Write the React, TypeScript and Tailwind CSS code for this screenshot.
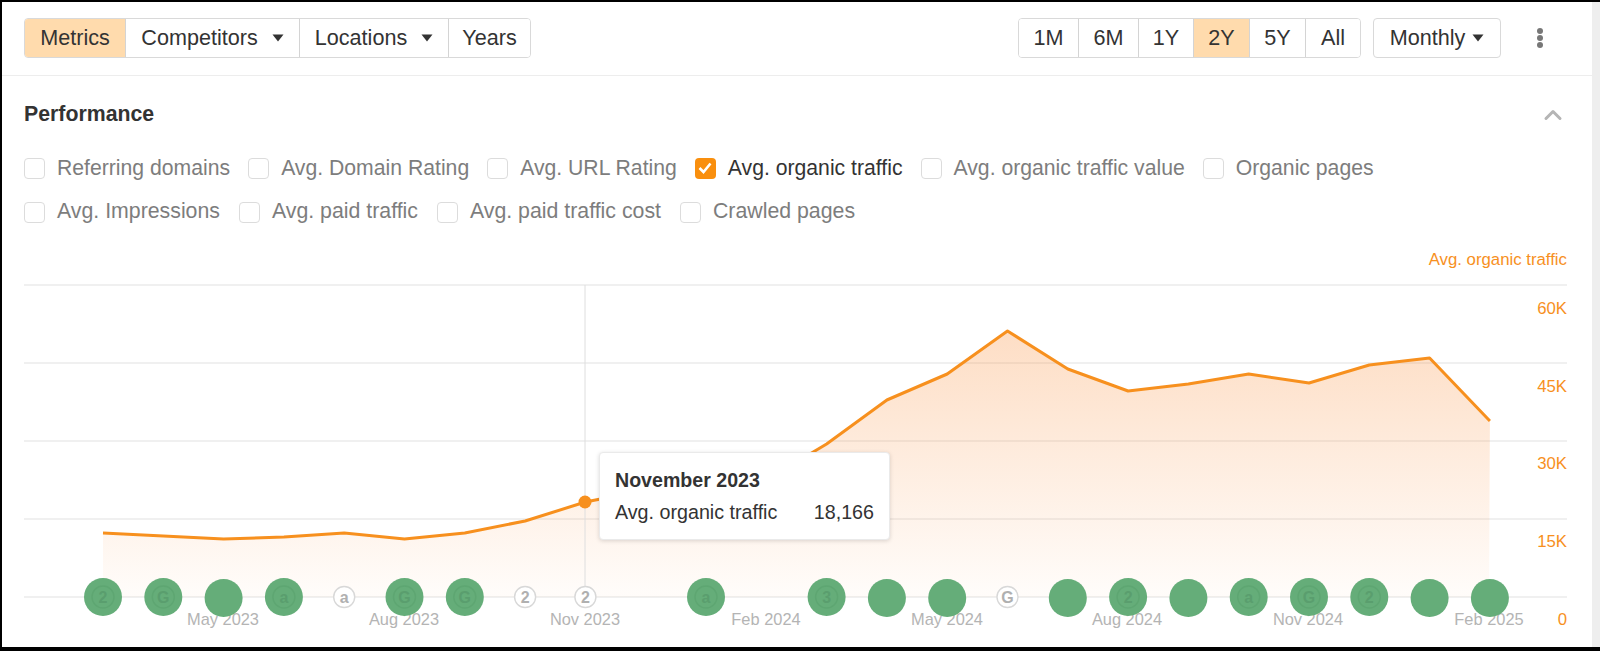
import React from 'react';
import { ChevronUp } from 'lucide-react';

const FONT = "font-['Liberation_Sans',Arial,sans-serif]";

const Caret = () => (
  <svg width="12" height="8" viewBox="0 0 12 8" className="ml-[14px]">
    <path d="M0.5 0.5h11L6 7.5z" fill="#333" />
  </svg>
);

const Segment = ({ label, active, caret, w }: { label: string; active?: boolean; caret?: boolean; w: string }) => (
  <div
    className={`flex items-center justify-center h-full border-r border-[#d4d4d4] last:border-r-0 ${w} ${active ? 'bg-[#ffdbad]' : 'bg-white'}`}
  >
    <span>{label}</span>
    {caret && <Caret />}
  </div>
);

const Check = ({ label, checked }: { label: string; checked?: boolean }) => (
  <div className="flex items-center gap-3">
    {checked ? (
      <div className="w-[21px] h-[21px] rounded-[4px] bg-[#f98f0e] flex items-center justify-center">
        <svg width="14" height="12" viewBox="0 0 14 12">
          <path d="M1.5 6l4 4 7-8.5" fill="none" stroke="#fff" strokeWidth="2.6" />
        </svg>
      </div>
    ) : (
      <div className="w-[21px] h-[21px] rounded-[4px] border border-[#dcdcdc] bg-white" />
    )}
    <span className={checked ? 'text-[#333]' : 'text-[#7d7d7d]'}>{label}</span>
  </div>
);

const ys = [533, 536, 539, 537, 533, 539, 533, 521, 502, 490, 488, 480, 444, 400, 374, 331, 369, 391, 384, 374, 383, 365, 358, 421];
const xs = ys.map((_, i) => 103 + i * 60.3);
const linePts = xs.map((x, i) => `${x},${ys[i]}`).join(' ');
const areaPts = `103,597 ${linePts} 1489,597`;

const grid = [285, 363, 441, 519, 597];
const yLabels = [
  { t: '60K', y: 314 },
  { t: '45K', y: 392 },
  { t: '30K', y: 469 },
  { t: '15K', y: 547 },
  { t: '0', y: 625 },
];
const xLabels = [
  { t: 'May 2023', x: 223 },
  { t: 'Aug 2023', x: 404 },
  { t: 'Nov 2023', x: 585 },
  { t: 'Feb 2024', x: 766 },
  { t: 'May 2024', x: 947 },
  { t: 'Aug 2024', x: 1127 },
  { t: 'Nov 2024', x: 1308 },
  { t: 'Feb 2025', x: 1489 },
];

// annotation markers: index into xs, glyph, small = outlined white one
const markers: { i: number; g?: string; small?: boolean }[] = [
  { i: 0, g: '2' },
  { i: 1, g: 'G' },
  { i: 2 },
  { i: 3, g: 'a' },
  { i: 4, g: 'a', small: true },
  { i: 5, g: 'G' },
  { i: 6, g: 'G' },
  { i: 7, g: '2', small: true },
  { i: 8, g: '2', small: true },
  { i: 10, g: 'a' },
  { i: 12, g: '3' },
  { i: 13 },
  { i: 14 },
  { i: 15, g: 'G', small: true },
  { i: 16 },
  { i: 17, g: '2' },
  { i: 18 },
  { i: 19, g: 'a' },
  { i: 20, g: 'G' },
  { i: 21, g: '2' },
  { i: 22 },
  { i: 23 },
];

const Chart = () => (
  <svg width="1590" height="400" viewBox="2 245 1590 400" className="block absolute left-0 top-[243px]">
    <defs>
      <linearGradient id="area" gradientUnits="userSpaceOnUse" x1="0" y1="330" x2="0" y2="590">
        <stop offset="0" stopColor="#fa8f3c" stopOpacity="0.3" />
        <stop offset="1" stopColor="#fa8f3c" stopOpacity="0.03" />
      </linearGradient>
    </defs>
    {grid.map((y) => (
      <line key={y} x1="24" x2="1567" y1={y} y2={y} stroke="#ebebeb" strokeWidth="1.5" />
    ))}
    <polygon points={areaPts} fill="url(#area)" />
    <line x1="585" x2="585" y1="285" y2="597" stroke="#dedede" strokeWidth="1" />
    <polyline points={linePts} fill="none" stroke="#f7901e" strokeWidth="3" strokeLinejoin="round" />
    <circle cx="585" cy="502" r="6.5" fill="#f7901e" />
    <text x="1567" y="265" textAnchor="end" fontSize="16.8" fill="#f7901e">Avg. organic traffic</text>
    {yLabels.map((l) => (
      <text key={l.t} x="1567" y={l.y} textAnchor="end" fontSize="16.8" fill="#f7901e">{l.t}</text>
    ))}
    {xLabels.map((l) => (
      <text key={l.t} x={l.x} y="625" textAnchor="middle" fontSize="16.4" fill="#b4b4b4">{l.t}</text>
    ))}
    {markers.map((m) =>
      m.small ? (
        <g key={m.i}>
          <circle cx={xs[m.i]} cy="597" r="10.5" fill="#fff" stroke="#d8d8d8" strokeWidth="1.4" />
          <text x={xs[m.i]} y="603" textAnchor="middle" fontSize="16" fontWeight="700" fill="#b0b0b0">{m.g}</text>
        </g>
      ) : (
        <g key={m.i}>
          <circle cx={xs[m.i]} cy={m.g ? 597 : 598} r="19" fill="#65ad79" />
          {m.g && (
            <>
              <circle cx={xs[m.i]} cy="597" r="11" fill="none" stroke="#5ea672" strokeWidth="1.4" />
              <text x={xs[m.i]} y="603" textAnchor="middle" fontSize="16" fontWeight="700" fill="#5a9e6e">{m.g}</text>
            </>
          )}
        </g>
      ),
    )}
  </svg>
);

export default function App() {
  return (
    <div className={`w-[1600px] h-[651px] flex bg-black pt-[2px] pb-[4px] pl-[2px] ${FONT} text-[#333] overflow-hidden`}>
      <div className="relative flex-1 flex flex-col bg-white">
        {/* Toolbar */}
        <div className="h-[74px] shrink-0 flex items-center justify-between pl-[22px] pr-[48px] pb-[1px] border-b border-[#ededed] text-[21.6px]">
          <div className="flex h-[40px] rounded-[4px] border border-[#d9d9d9] overflow-hidden">
            <Segment label="Metrics" active w="w-[101px]" />
            <Segment label="Competitors" caret w="w-[174px]" />
            <Segment label="Locations" caret w="w-[149px]" />
            <Segment label="Years" w="w-[81px]" />
          </div>
          <div className="flex items-center">
            <div className="flex h-[40px] rounded-[4px] border border-[#d9d9d9] overflow-hidden">
              <Segment label="1M" w="w-[60px]" />
              <Segment label="6M" w="w-[60px]" />
              <Segment label="1Y" w="w-[55px]" />
              <Segment label="2Y" active w="w-[56px]" />
              <Segment label="5Y" w="w-[56px]" />
              <Segment label="All" w="w-[54px]" />
            </div>
            <div className="ml-[12px] w-[128px] h-[40px] flex items-center justify-center rounded-[4px] border border-[#d9d9d9]">
              Monthly
              <svg width="12" height="8" viewBox="0 0 12 8" className="ml-[7px]">
                <path d="M0.5 0.5h11L6 7.5z" fill="#333" />
              </svg>
            </div>
            <svg width="8" height="22" viewBox="0 0 8 22" className="ml-[35px]">
              <circle cx="4" cy="4" r="3" fill="#777" />
              <circle cx="4" cy="11" r="3" fill="#777" />
              <circle cx="4" cy="18" r="3" fill="#777" />
            </svg>
          </div>
        </div>

        {/* Performance */}
        <div className="pl-[22px] pr-[25px]">
          <div className="flex items-center justify-between h-[76px] pt-[1px]">
            <h2 className="text-[21.3px] font-bold">Performance</h2>
            <ChevronUp className="w-[28px] h-[28px] text-[#b5b5b5]" strokeWidth={2.6} />
          </div>
          <div className="flex flex-col gap-[20px] mt-[4px]">
            <div className="flex gap-[18px] h-[24px] text-[21.2px]">
              <Check label="Referring domains" />
              <Check label="Avg. Domain Rating" />
              <Check label="Avg. URL Rating" />
              <Check label="Avg. organic traffic" checked />
              <Check label="Avg. organic traffic value" />
              <Check label="Organic pages" />
            </div>
            <div className="flex gap-[19px] h-[24px] text-[21.3px]">
              <Check label="Avg. Impressions" />
              <Check label="Avg. paid traffic" />
              <Check label="Avg. paid traffic cost" />
              <Check label="Crawled pages" />
            </div>
          </div>
        </div>

        <Chart />

        {/* Tooltip */}
        <div className="absolute left-[597px] top-[450px] w-[291px] h-[88px] bg-white rounded-[4px] border border-[#eaeaea] shadow-[0_1px_4px_rgba(0,0,0,0.15)] px-[15px] pt-[15px]">
          <div className="text-[19.6px] font-bold leading-[24px] text-[#333]">November 2023</div>
          <div className="flex justify-between items-center text-[19.7px] leading-[24px] mt-[8px]">
            <span>Avg. organic traffic</span>
            <span>18,166</span>
          </div>
        </div>
      </div>
      <div className="w-[8px] shrink-0 bg-[#eeeeee]" />
    </div>
  );
}
